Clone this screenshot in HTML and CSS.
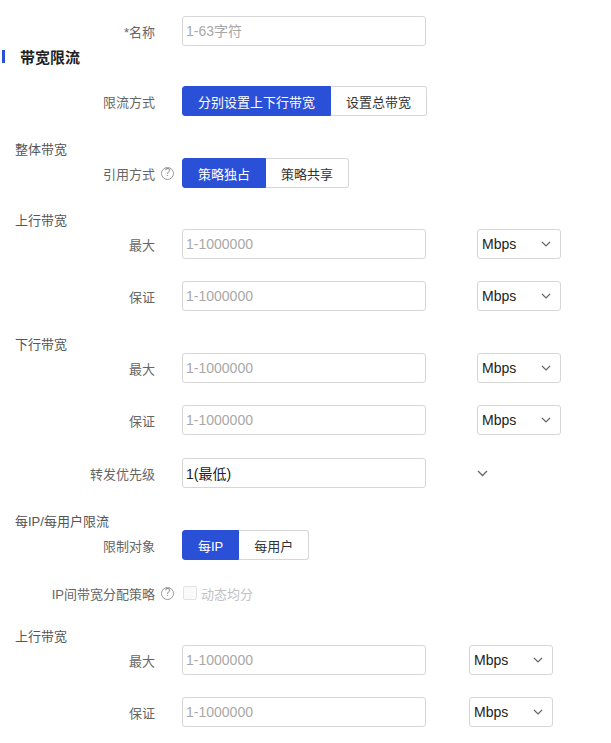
FILE: index.html
```
<!DOCTYPE html>
<html>

<head>
    <title>带宽限流</title>
    <meta name="viewport" content="width=device-width, initial-scale=1">
    <link rel="stylesheet" href="styles.css">
</head>

<body>
    <div class="form">
        <div class="row row-first">
            <label class="label">*名称</label>
            <input class="input" placeholder="1-63字符">
        </div>

        <div class="section-title">带宽限流</div>

        <div class="row row-mode">
            <label class="label">限流方式</label>
            <div class="seg">
                <button class="seg-btn active">分别设置上下行带宽</button>
                <button class="seg-btn">设置总带宽</button>
            </div>
        </div>

        <div class="group-title">整体带宽</div>
        <div class="row">
            <label class="label">引用方式<span class="help">?</span></label>
            <div class="seg">
                <button class="seg-btn active">策略独占</button>
                <button class="seg-btn">策略共享</button>
            </div>
        </div>

        <div class="group-title gt-up">上行带宽</div>
        <div class="row">
            <label class="label">最大</label>
            <input class="input" placeholder="1-1000000">
            <div class="select">Mbps<span class="chev"><svg width="10" height="6" viewBox="0 0 10 6"><polyline points="1,1 5,5 9,1" fill="none" stroke="#666" stroke-width="1.2"/></svg></span></div>
        </div>
        <div class="row row-gap">
            <label class="label">保证</label>
            <input class="input" placeholder="1-1000000">
            <div class="select">Mbps<span class="chev"><svg width="10" height="6" viewBox="0 0 10 6"><polyline points="1,1 5,5 9,1" fill="none" stroke="#666" stroke-width="1.2"/></svg></span></div>
        </div>

        <div class="group-title">下行带宽</div>
        <div class="row">
            <label class="label">最大</label>
            <input class="input" placeholder="1-1000000">
            <div class="select">Mbps<span class="chev"><svg width="10" height="6" viewBox="0 0 10 6"><polyline points="1,1 5,5 9,1" fill="none" stroke="#666" stroke-width="1.2"/></svg></span></div>
        </div>
        <div class="row row-gap">
            <label class="label">保证</label>
            <input class="input" placeholder="1-1000000">
            <div class="select">Mbps<span class="chev"><svg width="10" height="6" viewBox="0 0 10 6"><polyline points="1,1 5,5 9,1" fill="none" stroke="#666" stroke-width="1.2"/></svg></span></div>
        </div>

        <div class="row row-priority">
            <label class="label">转发优先级</label>
            <div class="input input-value">1(最低)</div>
            <span class="priority-chev"><svg width="11" height="7" viewBox="0 0 11 7"><polyline points="1,1 5.5,5.5 10,1" fill="none" stroke="#666" stroke-width="1.3"/></svg></span>
        </div>

        <div class="group-title">每IP/每用户限流</div>
        <div class="row">
            <label class="label">限制对象</label>
            <div class="seg">
                <button class="seg-btn active">每IP</button>
                <button class="seg-btn">每用户</button>
            </div>
        </div>

        <div class="row row-check">
            <label class="label">IP间带宽分配策略<span class="help">?</span></label>
            <span class="checkbox"></span>
            <span class="check-text">动态均分</span>
        </div>

        <div class="group-title gt-last">上行带宽</div>
        <div class="row">
            <label class="label">最大</label>
            <input class="input" placeholder="1-1000000">
            <div class="select select-shift">Mbps<span class="chev"><svg width="10" height="6" viewBox="0 0 10 6"><polyline points="1,1 5,5 9,1" fill="none" stroke="#666" stroke-width="1.2"/></svg></span></div>
        </div>
        <div class="row row-gap">
            <label class="label">保证</label>
            <input class="input" placeholder="1-1000000">
            <div class="select select-shift">Mbps<span class="chev"><svg width="10" height="6" viewBox="0 0 10 6"><polyline points="1,1 5,5 9,1" fill="none" stroke="#666" stroke-width="1.2"/></svg></span></div>
        </div>
    </div>
</body>

</html>
```

FILE: styles.css
```
body {
    margin: 0;
    background: #fff;
    font-family: "Liberation Sans", "Noto Sans CJK SC", sans-serif;
    color: #333;
}

.form {
    padding-top: 16px;
}

.row {
    display: flex;
    align-items: center;
    height: 30px;
}

.row-gap {
    margin-top: 22px;
}

.row-mode {
    margin-top: 20px;
}

.row-priority {
    margin-top: 23px;
}

.row-check {
    margin-top: 18px;
}

.label {
    display: flex;
    justify-content: flex-end;
    align-items: center;
    width: 155px;
    margin-right: 27px;
    font-size: 13px;
    color: #666;
    flex-shrink: 0;
}

/* question mark hangs in the gap after the label */
.help {
    display: inline-flex;
    justify-content: center;
    align-items: center;
    box-sizing: border-box;
    width: 13px;
    height: 13px;
    margin-left: 6px;
    margin-right: -19px;
    border: 1px solid #999;
    border-radius: 50%;
    font-size: 10px;
    line-height: 1;
    color: #888;
}

.section-title {
    display: flex;
    align-items: center;
    height: 20px;
    font-size: 15px;
    font-weight: bold;
    color: #222;
}

.section-title:before {
    content: "";
    width: 3px;
    height: 13px;
    margin-left: 2px;
    margin-right: 15px;
    background: #2a50d8;
}

.group-title {
    margin-top: 26px;
    padding-left: 15px;
    line-height: 16px;
    font-size: 13px;
    color: #555;
}

.gt-up {
    margin-top: 25px;
}

.gt-last {
    margin-top: 21px;
}

.input {
    box-sizing: border-box;
    width: 244px;
    height: 30px;
    padding: 0 3px;
    border: 1px solid #d6d6d6;
    border-radius: 3px;
    font-family: inherit;
    font-size: 14px;
    color: #222;
    outline: none;
}

.input::placeholder {
    color: #a8a8a8;
}

.input-value {
    display: flex;
    align-items: center;
}

.priority-chev {
    display: flex;
    margin-left: 51px;
}

.select {
    box-sizing: border-box;
    display: flex;
    justify-content: space-between;
    align-items: center;
    width: 84px;
    height: 30px;
    margin-left: 51px;
    padding: 0 9px 0 4px;
    border: 1px solid #d6d6d6;
    border-radius: 3px;
    font-size: 14px;
    color: #222;
}

.select-shift {
    margin-left: 43px;
}

.chev {
    display: flex;
}

.seg {
    display: flex;
}

.seg-btn {
    height: 30px;
    padding: 0 15px;
    border: 1px solid #d6d6d6;
    background: #fff;
    font-family: inherit;
    font-size: 13px;
    color: #333;
    cursor: pointer;
}

.seg-btn:first-child {
    border-radius: 3px 0 0 3px;
}

.seg-btn:last-child {
    border-left: none;
    border-radius: 0 3px 3px 0;
}

.seg-btn.active {
    background: #2a50d8;
    border-color: #2a50d8;
    color: #fff;
}

.checkbox {
    box-sizing: border-box;
    width: 14px;
    height: 14px;
    margin-left: 1px;
    border: 1px solid #e2e2e2;
    border-radius: 2px;
    background: #fafafa;
}

.check-text {
    margin-left: 4px;
    font-size: 13px;
    color: #c2c2c2;
}
```
